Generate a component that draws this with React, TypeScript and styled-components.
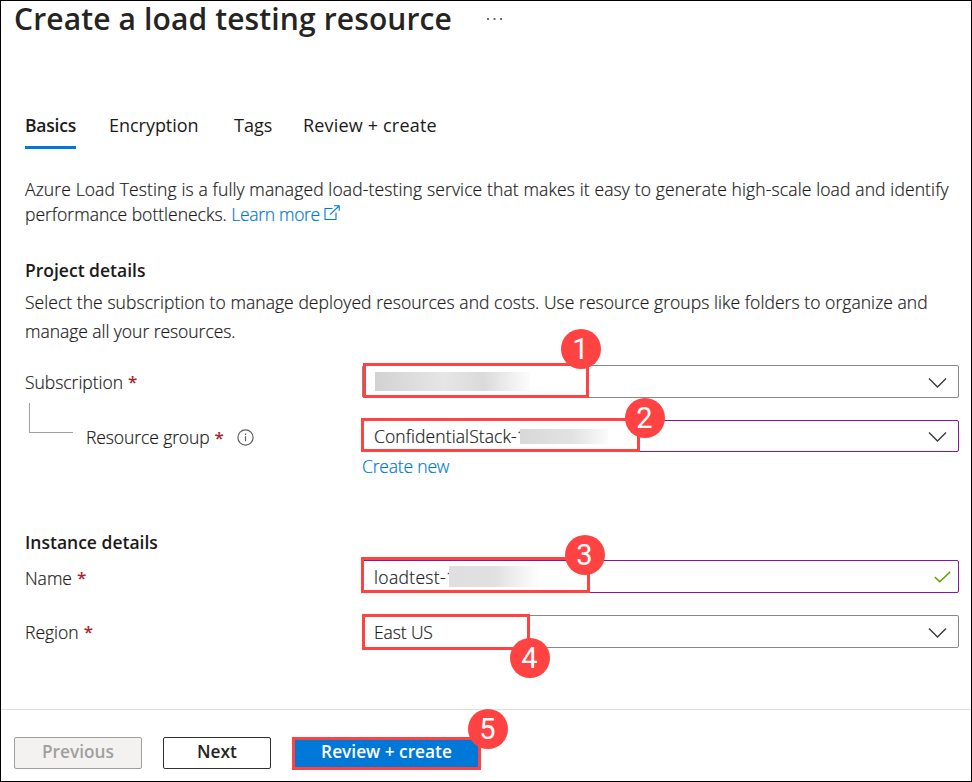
import React from 'react';
import styled, { createGlobalStyle } from 'styled-components';

const RED = '#ff4343';
const BLUE = '#0078d7';
const INK = '#1b1a19';

const GlobalStyle = createGlobalStyle`
  * { box-sizing: border-box; }
  body {
    margin: 0;
    background: #fff;
    color: ${INK};
    font-family: 'Open Sans', 'Noto Sans', sans-serif;
    font-size: 17.5px;
    font-weight: 300;
  }
`;

const Page = styled.div`
  width: 972px;
  height: 782px;
  border: 1px solid #000;
  display: flex;
  flex-direction: column;
`;

const TitleBar = styled.header`
  display: flex;
  align-items: center;
  height: 36px;
  padding-left: 13px;
`;

const Title = styled.h1`
  margin: 0;
  width: 472px;
  font-size: 30px;
  font-weight: 600;
  line-height: 36px;
  letter-spacing: 0.13px;
  color: #252423;
  white-space: nowrap;
`;

const Tabs = styled.nav`
  display: flex;
  gap: 33px;
  margin-top: 76px;
  padding-left: 24px;
`;

const Tab = styled.a<{ $active?: boolean; $width: number; $spacing: number }>`
  width: ${p => p.$width}px;
  height: 36px;
  line-height: 24px;
  font-size: ${p => (p.$active ? 17.5 : 18)}px;
  font-weight: ${p => (p.$active ? 600 : 400)};
  letter-spacing: ${p => p.$spacing}px;
  border-bottom: 3px solid ${p => (p.$active ? BLUE : 'transparent')};
  white-space: nowrap;
`;

const Body = styled.main`
  flex: 1;
  padding: 28px 12px 0 24px;
`;

const Line = styled.span<{ $spacing?: number }>`
  display: inline-block;
  white-space: nowrap;
  letter-spacing: ${p => p.$spacing ?? 0}px;
  -webkit-text-stroke: 0.2px currentColor;
`;

const Paragraph = styled.p<{ $leading: number }>`
  display: flex;
  flex-direction: column;
  align-items: flex-start;
  margin: 0;
  line-height: ${p => p.$leading}px;
`;

const Inline = styled.span`
  display: flex;
`;

const Link = styled.a<{ $spacing: number }>`
  display: flex;
  color: ${BLUE};
  letter-spacing: ${p => p.$spacing}px;
  -webkit-text-stroke: 0.2px currentColor;
  white-space: nowrap;
`;

const SectionTitle = styled.h2<{ $top: number; $bottom: number }>`
  margin: ${p => p.$top}px 0 ${p => p.$bottom}px;
  font-size: 17.5px;
  font-weight: 600;
  line-height: 24px;
`;

const Row = styled.div<{ $top: number; $height: number }>`
  display: grid;
  grid-template-columns: 337px 597px;
  height: ${p => p.$height}px;
  margin-top: ${p => p.$top}px;
`;

const Label = styled.label<{ $drop?: number }>`
  display: flex;
  align-items: center;
  padding-top: ${p => (p.$drop ?? 0) * 2}px;
`;

const Star = styled.span`
  margin-left: 5px;
  font-size: 17px;
  font-weight: 600;
  color: #a4262c;
`;

const Elbow = styled.span<{ $lift: number }>`
  align-self: flex-start;
  flex: none;
  width: 44px;
  height: 30px;
  margin: -${p => p.$lift}px 13px 0 4px;
  border-left: 1px solid #a19f9d;
  border-bottom: 1px solid #a19f9d;
`;

const Control = styled.div<{ $edited?: boolean; $inset?: number }>`
  position: relative;
  display: flex;
  align-items: center;
  padding: 0 ${p => p.$inset ?? 11}px 0 11px;
  border: 1px solid ${p => (p.$edited ? '#881798' : '#8a8886')};
  border-radius: 2px;

  & > svg { margin-left: auto; }
`;

const Redaction = styled.span<{ $w: number; $h: number; $pull?: number; $fill: string }>`
  z-index: 1;
  width: ${p => p.$w}px;
  height: ${p => p.$h}px;
  margin-left: ${p => p.$pull ?? 0}px;
  background: linear-gradient(90deg, ${p => p.$fill});
`;

const Outline = styled.span<{ $x: number; $y: number; $w: number; $h: number }>`
  position: absolute;
  left: ${p => p.$x}px;
  top: ${p => p.$y}px;
  width: ${p => p.$w}px;
  height: ${p => p.$h}px;
  border: 3px solid ${RED};
`;

const Badge = styled.span<{ $x: number; $y: number }>`
  position: absolute;
  z-index: 2;
  left: ${p => p.$x}px;
  top: ${p => p.$y}px;
  width: 40px;
  height: 40px;
  padding-right: 1px;
  border-radius: 50%;
  background: ${RED};
  color: #fff;
  font: 400 29px/41px Roboto, 'Liberation Sans', sans-serif;
  text-align: center;
`;

const Footer = styled.footer`
  display: flex;
  height: 72px;
  padding: 27px 0 0 13px;
  border-top: 1px solid #dedddc;
`;

const Button = styled.button<{ $w: number; $left?: number; $kind: 'disabled' | 'plain' | 'primary' }>`
  position: relative;
  width: ${p => p.$w}px;
  height: ${p => (p.$kind === 'primary' ? 33 : 32)}px;
  margin: 0 0 0 ${p => p.$left ?? 0}px;
  padding: 0 0 3px;
  border: ${p => (p.$kind === 'primary' ? `3px solid ${RED}` : `1px solid ${p.$kind === 'disabled' ? '#a19f9d' : '#323130'}`)};
  border-radius: ${p => (p.$kind === 'primary' ? 0 : 2)}px;
  background: ${p => ({ disabled: '#f3f2f1', plain: '#fff', primary: BLUE })[p.$kind]};
  color: ${p => ({ disabled: '#a19f9d', plain: '#252423', primary: '#fff' })[p.$kind]};
  font: 600 17.3px 'Open Sans', sans-serif;
  line-height: ${p => (p.$kind === 'primary' ? 24 : 27)}px;
  white-space: nowrap;
`;

const MoreIcon = () => (
  <svg width="16" height="4" viewBox="0 0 16 4" fill="#6f6d6b">
    <rect x="1" y="1" width="2" height="2" />
    <rect x="7.5" y="1" width="2" height="2" />
    <rect x="14" y="1" width="2" height="2" />
  </svg>
);

const LinkIconSvg = styled.svg`
  margin: 3px 0 0 4.5px;
`;

const ExternalIcon = () => (
  <LinkIconSvg width="16" height="16" viewBox="0 0 16 16" fill="none" stroke={BLUE} strokeWidth="1.1">
    <path d="M8.5 3.5H1v11h11V7.5M6 9.7 15 1M10 .8h5.2v5" />
  </LinkIconSvg>
);

const ChevronSvg = styled.svg`
  margin-top: 2px;
`;

const Chevron = () => (
  <ChevronSvg width="19" height="12" viewBox="0 0 19 12" fill="none" stroke="#3b3a39" strokeWidth="1.4">
    <path d="M1 1.4 9.5 9.9 18 1.4" />
  </ChevronSvg>
);

const CheckIcon = () => (
  <svg width="17" height="12" viewBox="0 0 17 12" fill="none" stroke="#57a300" strokeWidth="1.5">
    <path d="M.8 6 5.8 10.8 16.2.8" />
  </svg>
);

const InfoSvg = styled.svg`
  margin: 1px 0 0 13px;
`;

const InfoIcon = () => (
  <InfoSvg width="17" height="17" viewBox="0 0 17 17" fill="none" stroke="#605e5c" strokeWidth="1.2">
    <circle cx="8.5" cy="8.5" r="7.6" />
    <path d="M8.5 7.2v5M8.5 4.4v1.5" />
  </InfoSvg>
);

export default function App() {
  return (
    <Page>
      <GlobalStyle />
      <TitleBar>
        <Title>Create a load testing resource</Title>
        <MoreIcon />
      </TitleBar>

      <Tabs>
        <Tab $active $width={51} $spacing={-0.2}>Basics</Tab>
        <Tab $width={92} $spacing={-0.03}>Encryption</Tab>
        <Tab $width={36} $spacing={0}>Tags</Tab>
        <Tab $width={140} $spacing={0.18}>Review + create</Tab>
      </Tabs>

      <Body>
        <Paragraph $leading={25}>
          <Line $spacing={0.125}>
            Azure Load Testing is a fully managed load-testing service that makes it easy to generate high-scale load and identify
          </Line>
          <Inline>
            <Line>performance bottlenecks.&nbsp;</Line>
            <Link $spacing={-0.3}>
              Learn more
              <ExternalIcon />
            </Link>
          </Inline>
        </Paragraph>

        <SectionTitle $top={31} $bottom={6}>Project details</SectionTitle>
        <Paragraph $leading={29}>
          <Line $spacing={0.055}>
            Select the subscription to manage deployed resources and costs. Use resource groups like folders to organize and
          </Line>
          <Line $spacing={-0.04}>manage all your resources.</Line>
        </Paragraph>

        <Row $top={19} $height={33}>
          <Label>
            <Line $spacing={-0.03}>Subscription</Line>
            <Star>*</Star>
          </Label>
          <Control>
            <Redaction as="i" $w={155} $h={19} $pull={1} $fill="#d2d2d2, #dcdcdc 22%, #e6e6e6 45%, #dadada 70%, #f0f0f0 88%, #fcfcfc" />
            <Chevron />
            <Outline $x={0} $y={-3} $w={226} $h={35} />
            <Badge $x={198} $y={-37}>1</Badge>
          </Control>
        </Row>

        <Row $top={22} $height={32}>
          <Label $drop={1}>
            <Elbow $lift={19} />
            <Line $spacing={-0.1}>Resource group</Line>
            <Star>*</Star>
            <InfoIcon />
          </Label>
          <Control $edited>
            <Line $spacing={0.09}>ConfidentialStack-1</Line>
            <Redaction $w={88} $h={15} $pull={-7} $fill="#d8d8d8, #dedede 35%, #e2e2e2 60%, #fbfbfb" />
            <Chevron />
            <Outline $x={-2} $y={-3} $w={279} $h={34} />
            <Badge $x={262} $y={-23}>2</Badge>
          </Control>
        </Row>
        <Row $top={2} $height={24}>
          <span />
          <Link $spacing={-0.19}>Create new</Link>
        </Row>

        <SectionTitle $top={52} $bottom={6}>Instance details</SectionTitle>
        <Row $top={0} $height={33}>
          <Label $drop={1}>
            <Line>Name</Line>
            <Star>*</Star>
          </Label>
          <Control $edited $inset={7}>
            <Line $spacing={0.33}>loadtest-1</Line>
            <Redaction $w={90} $h={21} $pull={-7} $fill="#dfdfdf, #e0e0e0 50%, #f0f0f0 75%, #fdfdfd" />
            <CheckIcon />
            <Outline $x={-2} $y={-4} $w={229} $h={36} />
            <Badge $x={202} $y={-26}>3</Badge>
          </Control>
        </Row>

        <Row $top={22} $height={33}>
          <Label>
            <Line>Region</Line>
            <Star>*</Star>
          </Label>
          <Control>
            <Line $spacing={-0.12}>East US</Line>
            <Chevron />
            <Outline $x={-1} $y={-2} $w={168} $h={36} />
            <Badge $x={147} $y={22}>4</Badge>
          </Control>
        </Row>
      </Body>

      <Footer>
        <Button $kind="disabled" $w={128} disabled>Previous</Button>
        <Button $kind="plain" $w={108} $left={21}>Next</Button>
        <Button $kind="primary" $w={189} $left={21}>
          Review + create
          <Badge $x={173} $y={-31}>5</Badge>
        </Button>
      </Footer>
    </Page>
  );
}
